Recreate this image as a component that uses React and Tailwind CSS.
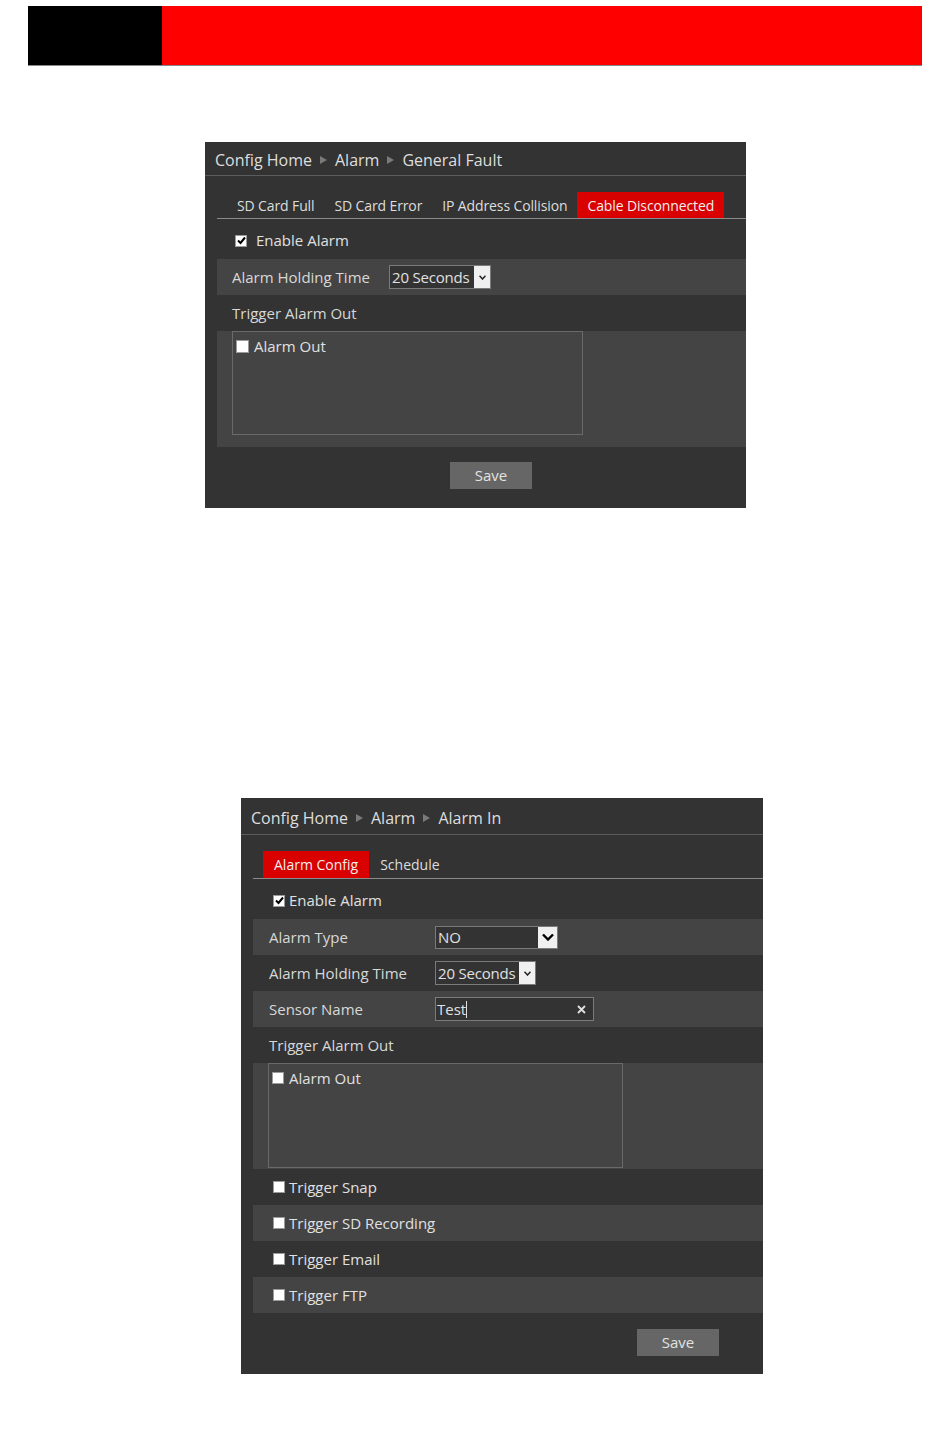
import React from "react";

const font = { fontFamily: '"Open Sans", "Noto Sans", sans-serif' };

function Sep() {
  return (
    <svg width="7" height="8" viewBox="0 0 7 8" className="mx-[8px] shrink-0">
      <polygon points="0,0 7,4 0,8" fill="#7a7a7a" />
    </svg>
  );
}

function Crumbs({ items, h }) {
  return (
    <div
      className="flex items-center pl-[10px] pt-[3px] border-b border-[#5c5c5c] text-[16px] text-[#dedede]"
      style={{ height: h }}
    >
      {items.map((t, i) => (
        <React.Fragment key={t}>
          {i > 0 && <Sep />}
          <span>{t}</span>
        </React.Fragment>
      ))}
    </div>
  );
}

function Tabs({ tabs, active, gap, h, tight }) {
  return (
    <div className="ml-[12px] pl-[10px] border-b border-[#8a8a8a] flex items-end" style={{ paddingTop: gap }}>
      {tabs.map((t) => (
        <div
          key={t}
          className={
            "flex items-center text-[14px] " +
            (tight ? "px-[10px] tracking-[-0.12px] " : "px-[11px] ") +
            (t === active ? "bg-[#d90000] text-[#eeeeee]" : "text-[#dddddd]")
          }
          style={{ height: h }}
        >
          {t}
        </div>
      ))}
    </div>
  );
}

function Box({ checked, size = 12 }) {
  return (
    <div
      className="bg-white border border-[#9a9a9a] flex items-center justify-center shrink-0"
      style={{ width: size, height: size }}
    >
      {checked && (
        <svg width="9" height="9" viewBox="0 0 9 9">
          <path d="M1 4.5 L3.5 7 L8 1.5" stroke="#000" strokeWidth="2" fill="none" />
        </svg>
      )}
    </div>
  );
}

function Row({ dark, children, h = "h-[36px]", className = "" }) {
  return (
    <div className={`${h} flex items-center ${dark ? "bg-[#333333]" : "bg-[#444444]"} ${className}`}>
      {children}
    </div>
  );
}

function SmallSelect({ value, width }) {
  return (
    <div className="h-[24px] flex items-stretch border border-[#7a7a7a] bg-[#333333]" style={{ width }}>
      <span className="flex-1 pl-[2px] text-[15px] leading-[22px] text-[#e0e0e0] tracking-[-0.2px]">{value}</span>
      <span className="w-[16px] bg-[#f0f0f0] flex items-center justify-center">
        <svg width="7" height="5" viewBox="0 0 7 5">
          <path d="M0.5 0.8 L3.5 4 L6.5 0.8" stroke="#222" strokeWidth="1.5" fill="none" />
        </svg>
      </span>
    </div>
  );
}

function AlarmOutBox({ h, w, box }) {
  return (
    <div className="ml-[15px] border border-[#6a6a6a] bg-[#444444] self-start" style={{ height: h, width: w }}>
      <div className="flex items-center gap-[5px] pl-[3px] pt-[3px] text-[15px] text-[#e0e0e0]">
        <Box size={box} />
        <span>Alarm Out</span>
      </div>
    </div>
  );
}

function Save({ ml }) {
  return (
    <div
      className="w-[82px] h-[27px] bg-[#666666] text-[#e2e2e2] text-[15px] flex items-center justify-center"
      style={{ marginLeft: ml }}
    >
      Save
    </div>
  );
}

export default function App() {
  return (
    <div className="bg-white w-[950px] min-h-[1456px] pt-[6px]" style={font}>
      <div className="mx-[28px] h-[60px] flex border-b border-[#888]">
        <div className="w-[134px] bg-black" />
        <div className="flex-1 bg-[#ff0000]" />
      </div>

      {/* General Fault panel */}
      <div className="ml-[205px] mt-[76px] w-[541px] h-[366px] bg-[#333333]">
        <Crumbs items={["Config Home", "Alarm", "General Fault"]} h={34} />
        <Tabs
          tabs={["SD Card Full", "SD Card Error", "IP Address Collision", "Cable Disconnected"]}
          active="Cable Disconnected"
          gap={16}
          h={26}
          tight
        />
        <div className="ml-[12px]">
          <Row dark h="h-[40px]" className="pt-[3px]">
            <div className="pl-[18px] flex items-center gap-[9px] text-[15px] text-[#e0e0e0]">
              <Box checked />
              <span>Enable Alarm</span>
            </div>
          </Row>
          <Row>
            <span className="pl-[15px] w-[172px] text-[15px] text-[#d8d8d8]">Alarm Holding Time</span>
            <SmallSelect value="20 Seconds" width={102} />
          </Row>
          <Row dark>
            <span className="pl-[15px] text-[15px] text-[#d8d8d8]">Trigger Alarm Out</span>
          </Row>
          <Row h="h-[116px]" className="items-start">
            <AlarmOutBox h={104} w={351} box={13} />
          </Row>
          <div className="pt-[15px]">
            <Save ml={233} />
          </div>
        </div>
      </div>

      {/* Alarm In panel */}
      <div className="ml-[241px] mt-[290px] w-[522px] h-[576px] bg-[#333333]">
        <Crumbs items={["Config Home", "Alarm", "Alarm In"]} h={37} />
        <Tabs tabs={["Alarm Config", "Schedule"]} active="Alarm Config" gap={16} h={27} />
        <div className="ml-[12px]">
          <Row dark h="h-[40px]" className="pt-[3px]">
            <div className="pl-[20px] flex items-center gap-[4px] text-[15px] text-[#e0e0e0]">
              <Box checked />
              <span>Enable Alarm</span>
            </div>
          </Row>
          <Row>
            <span className="pl-[16px] w-[182px] text-[15px] text-[#d8d8d8]">Alarm Type</span>
            <div className="w-[123px] h-[23px] flex items-stretch border border-[#7a7a7a] bg-[#333333]">
              <span className="flex-1 pl-[2px] text-[15px] leading-[21px] text-[#e0e0e0]">NO</span>
              <span className="w-[19px] bg-[#f0f0f0] flex items-center justify-center">
                <svg width="12" height="8" viewBox="0 0 12 8">
                  <path d="M1 1.5 L6 6.5 L11 1.5" stroke="#000" strokeWidth="2.4" fill="none" />
                </svg>
              </span>
            </div>
          </Row>
          <Row dark>
            <span className="pl-[16px] w-[182px] text-[15px] text-[#d8d8d8]">Alarm Holding Time</span>
            <SmallSelect value="20 Seconds" width={101} />
          </Row>
          <Row>
            <span className="pl-[16px] w-[182px] text-[15px] text-[#d8d8d8]">Sensor Name</span>
            <div className="w-[159px] h-[24px] flex items-center border border-[#7a7a7a] bg-[#333333]">
              <span className="pl-[1px] text-[15px] text-[#e0e0e0]">Test</span>
              <span className="w-[1px] h-[17px] bg-[#e0e0e0]" />
              <span className="ml-auto mr-[7px]">
                <svg width="9" height="9" viewBox="0 0 9 9">
                  <path d="M1 1 L8 8 M8 1 L1 8" stroke="#e0e0e0" strokeWidth="1.8" />
                </svg>
              </span>
            </div>
          </Row>
          <Row dark>
            <span className="pl-[16px] text-[15px] text-[#d8d8d8]">Trigger Alarm Out</span>
          </Row>
          <Row h="h-[106px]" className="items-start">
            <AlarmOutBox h={105} w={355} box={12} />
          </Row>
          {["Trigger Snap", "Trigger SD Recording", "Trigger Email", "Trigger FTP"].map((t, i) => (
            <Row key={t} dark={i % 2 === 0}>
              <div className="pl-[20px] flex items-center gap-[4px] text-[15px] text-[#e0e0e0]">
                <Box />
                <span>{t}</span>
              </div>
            </Row>
          ))}
          <div className="pt-[16px]">
            <Save ml={384} />
          </div>
        </div>
      </div>
    </div>
  );
}
